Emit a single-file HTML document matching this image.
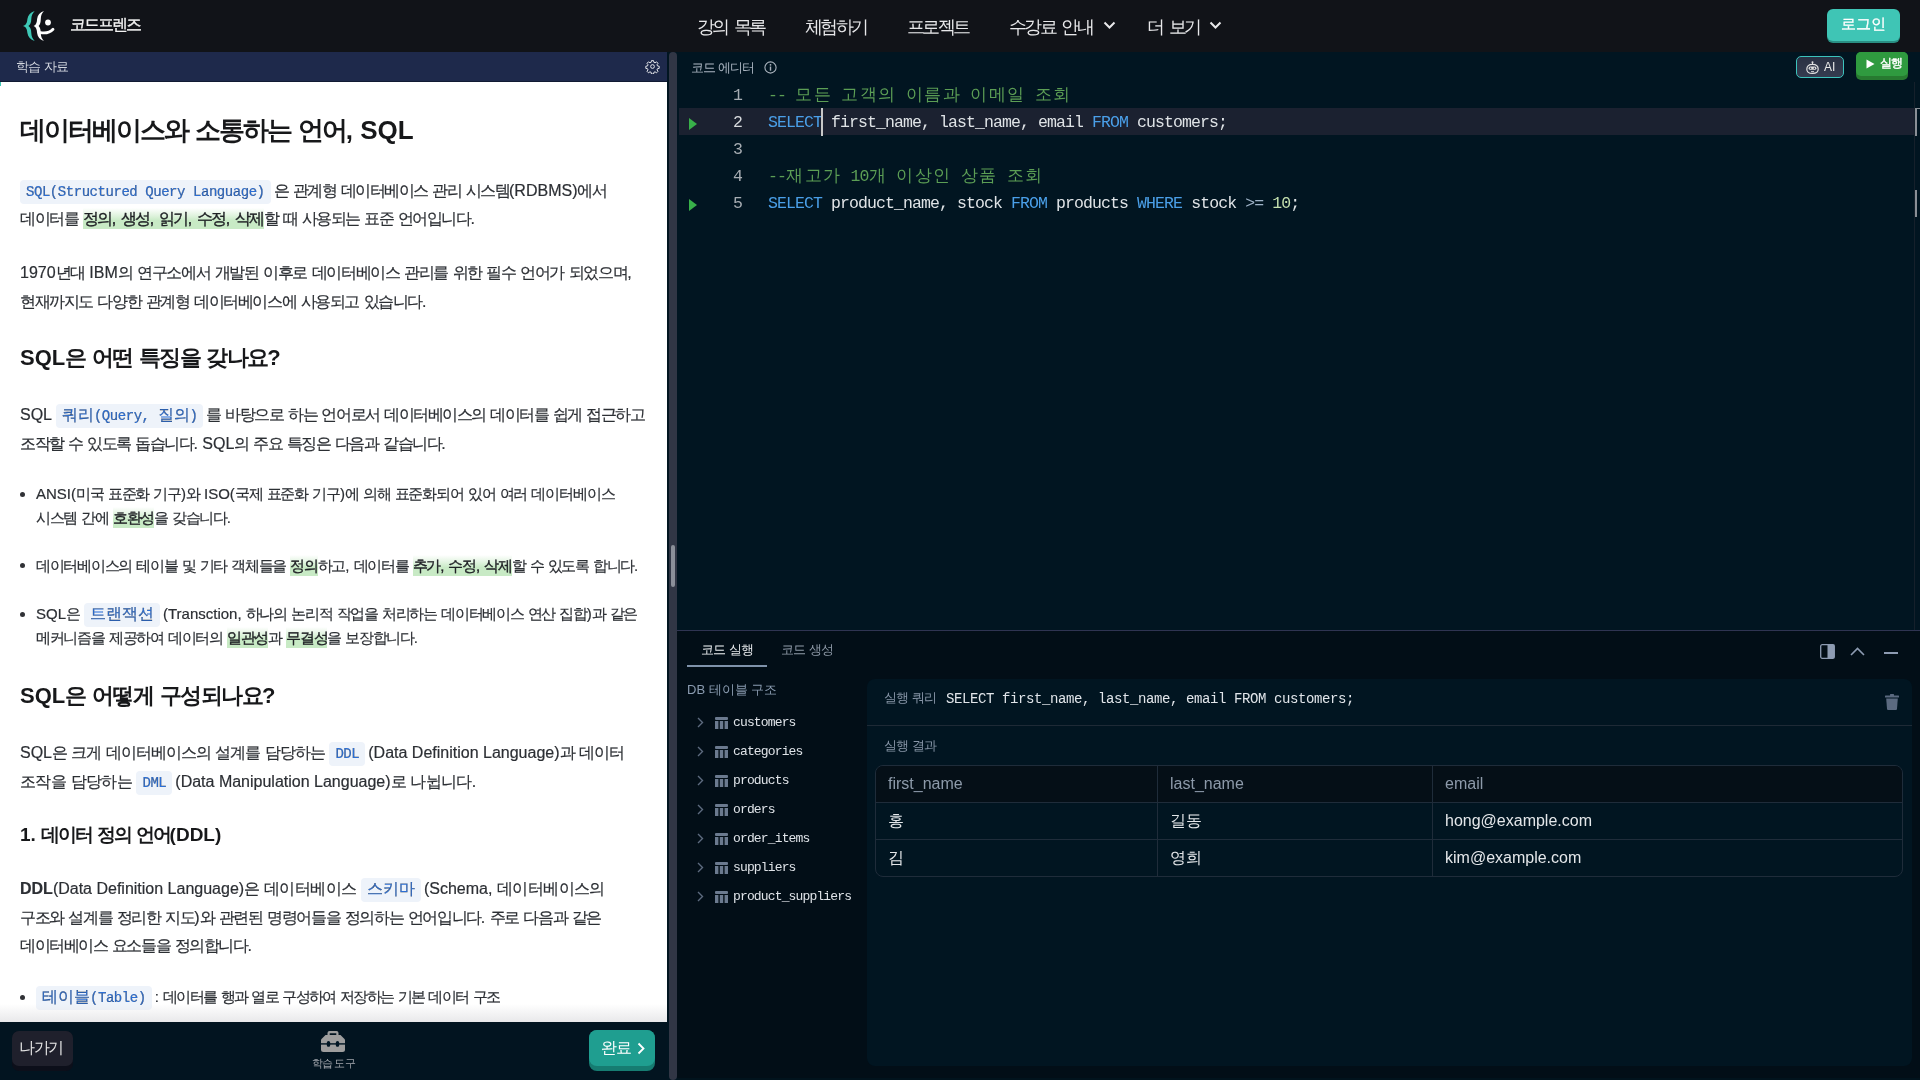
<!DOCTYPE html>
<html lang="ko"><head><meta charset="utf-8">
<style>
*{box-sizing:border-box;margin:0;padding:0}
html,body{width:1920px;height:1080px;overflow:hidden;background:#011521;font-family:"Liberation Sans",sans-serif}
.abs{position:absolute}
#hdr,#left,#editor,#bottom{will-change:transform}
#hdr{position:absolute;left:0;top:0;width:1920px;height:52px;background:#111318}
#hdr .brand{position:absolute;left:70px;top:14px;font-size:16px;color:#f2f2f2;font-weight:400;-webkit-text-stroke:0.35px #f2f2f2;letter-spacing:-1.9px;white-space:nowrap;line-height:22px}
.nav{position:absolute;top:16px;font-size:17.5px;letter-spacing:-2.65px;word-spacing:4px;color:#e8e8ea;white-space:nowrap;line-height:22px}
.chev{position:absolute;top:21px}
#login{position:absolute;left:1827px;top:9px;width:73px;height:32px;background:#3fc5b5;border-radius:6px;box-shadow:0 2px 0 #2a8f84;color:#fff;font-size:15px;text-align:center;line-height:30px;-webkit-text-stroke:0.3px #fff}

#left{position:absolute;left:0;top:52px;width:667px;height:1028px;background:#fff;overflow:hidden}
#lhead{position:absolute;left:0;top:0;width:667px;height:30px;background:#1e294b;border-bottom:1px solid #111a33}
#lhead span{position:absolute;left:16px;top:6px;font-size:13px;color:#d3d7df;line-height:17px;letter-spacing:-0.7px}
#content{position:absolute;left:0;top:30px;width:667px;height:940px;color:#303236;overflow:hidden;background:#fff}
#cin{position:absolute;left:0;top:-82px;width:667px;height:1080px}
.L{position:absolute;left:20px;white-space:nowrap;line-height:24px;height:24px}
.h1{font-size:26px;font-weight:700;color:#17181a}
.h2{font-size:22px;font-weight:700;color:#17181a}
.h3{font-size:19px;font-weight:700;color:#17181a}
.p{font-size:16px;color:#2c2f34;-webkit-text-stroke:0.2px #2c2f34}
.b{left:36px;font-size:15px;color:#2c2f34;-webkit-text-stroke:0.2px #2c2f34}
.L .h{letter-spacing:var(--ls,0px)}
code{font-family:"Liberation Mono",monospace;font-size:14px;color:#2b6fd6;background:#eef3fa;border-radius:4px;padding:4px 6px;letter-spacing:-0.45px;margin-right:3px}
code .k{font-size:15.6px;letter-spacing:0;line-height:10px}
mark{background:linear-gradient(rgba(200,234,197,0) 0%,rgba(200,234,197,0.55) 35%,#c8eac5 60%);color:#202226;font-weight:400;-webkit-text-stroke:0.35px #202226;padding:2px 0}
.dot{position:absolute;left:20px;width:5px;height:5px;border-radius:50%;background:#303236}
#lbot{position:absolute;left:0;top:970px;width:667px;height:58px;background:#021420}

#divider{position:absolute;left:667px;top:52px;width:10px;height:1028px;background:#011521}
#divbar{position:absolute;left:669px;top:52px;width:8px;height:1028px;background:#313645;border-radius:4px}

#editor{position:absolute;left:677px;top:52px;width:1243px;height:578px;background:#011521}
.ln{position:absolute;left:0;width:66px;text-align:right;font-family:"Liberation Mono",monospace;font-size:16px;color:#9aa3ad;line-height:27px}
.code{position:absolute;left:91px;font-family:"Liberation Mono",monospace;font-size:16px;color:#d9dde2;line-height:27px;white-space:pre}
.kw{color:#4fa2f0}.cm{color:#5aa05a}.num{color:#c7e3b5}


#lfade{position:absolute;left:0;top:952px;width:667px;height:18px;background:linear-gradient(rgba(255,255,255,0),rgba(230,230,232,0.9))}
#exit{position:absolute;left:12px;top:979px;width:61px;height:40px;background:#0c0f1a;border-radius:7px}
#exit div{position:absolute;left:0;top:0;width:61px;height:35px;background:#1f202c;border-radius:7px;color:#e6e6e6;font-size:16px;line-height:33px;text-align:center;letter-spacing:-1.2px;text-indent:-3px}
#done{position:absolute;left:589px;top:978px;width:66px;height:41px;background:#167c71;border-radius:8px}
#done div{position:absolute;left:0;top:0;width:66px;height:36px;background:#1f9e90;border-radius:8px;color:#fff;font-size:16px;line-height:35px;padding-left:12px;letter-spacing:-1.5px}
#tool{position:absolute;left:303px;top:1004px;width:61px;white-space:nowrap;color:#a0a4aa;font-size:10.5px;letter-spacing:-0.9px;text-align:center;line-height:14px}
.etitle{position:absolute;left:14px;top:7px;font-size:13px;color:#a9b4c0;line-height:17px;letter-spacing:-0.9px}
#aibtn{position:absolute;left:1119px;top:4px;width:48px;height:22px;border:1px solid #3cc3bd;border-radius:5px;background:linear-gradient(#2a3143,#353c50)}
#aibtn span{position:absolute;left:27px;top:2px;font-size:12px;color:#e8e8e8;line-height:16px}
#runbtn{position:absolute;left:1179px;top:0;width:52px;height:28px;background:#277a30;border-radius:5px}
#runbtn div{position:absolute;left:0;top:0;width:52px;height:24px;background:#2f9a3f;border-radius:5px}
#runbtn span{position:absolute;left:24px;top:3px;font-size:12px;color:#fff;line-height:16px;font-weight:400;-webkit-text-stroke:0.4px #fff;letter-spacing:-0.6px}
.ln{position:absolute;left:0;width:65px;text-align:right;font-family:"Liberation Mono",monospace;font-size:16.5px;letter-spacing:-0.9px;color:#a7adb3;line-height:27px;height:27px}
.code{position:absolute;left:91px;font-family:"Liberation Mono",monospace;font-size:16.5px;letter-spacing:-0.9px;color:#dfe3e6;line-height:27px;height:27px;white-space:pre}
.kk{letter-spacing:1.5px}
.kw{color:#4a9fe8}.cm{color:#5c9e55}.num{color:#c3dfae}.op{color:#9fb3c8}
#curline{position:absolute;left:2px;top:56px;width:1235px;height:27px;background:#1b2130}
.run{position:absolute;left:12px;width:0;height:0;border-top:6px solid transparent;border-bottom:6px solid transparent;border-left:8px solid #38b049}
#cursor{position:absolute;left:144px;top:56px;width:2px;height:28px;background:#c8c8c8}
#eruler{position:absolute;left:1237px;top:30px;width:1px;height:548px;background:#15202b}

.tab{position:absolute;top:10px;font-size:13px;line-height:17px;letter-spacing:-0.6px}
#tabline{position:absolute;left:10px;top:34px;width:80px;height:2px;background:#7f92aa}
#dbt{position:absolute;left:10px;top:50px;font-size:13px;color:#8a9bb0;line-height:17px}
.tr{position:absolute;left:0;height:20px;width:190px}
.tr .nm{position:absolute;left:56px;top:1px;font-family:"Liberation Mono",monospace;font-size:13px;letter-spacing:-0.85px;color:#dfe3e8;line-height:18px}
#card{position:absolute;left:190px;top:48px;width:1045px;height:387px;background:#011521;border-radius:8px}
#qlabel{position:absolute;left:17px;top:10px;font-size:13px;color:#8896a8;line-height:17px;letter-spacing:-0.6px}
#qtext{position:absolute;left:79px;top:11px;font-family:"Liberation Mono",monospace;font-size:14px;letter-spacing:-0.4px;color:#e1e5ea;line-height:18px;white-space:pre}
#qsep{position:absolute;left:0;top:46px;width:1045px;height:1px;background:#1e2a36}
#rlabel{position:absolute;left:17px;top:58px;font-size:13px;color:#8896a8;line-height:17px;letter-spacing:-0.6px}
#tbl{position:absolute;left:8px;top:86px;width:1028px;height:112px;border:1px solid #1f2c3a;border-radius:8px;overflow:hidden}
.row{position:absolute;left:0;width:1026px;height:37px;border-bottom:1px solid #1f2c3a}
.cell{position:absolute;top:0;height:37px;line-height:36px;font-size:16px;padding-left:12px}
.c2{border-left:1px solid #1f2c3a}
#bottom{position:absolute;left:677px;top:630px;width:1243px;height:450px;background:#020e17;border-top:1px solid #2f3452}
.c2{height:37px}
</style></head><body>
<div id="hdr">
  <svg class="abs" style="left:0;top:0" width="70" height="52" viewBox="0 0 70 52">
    <path d="M34.7,11 C30.5,12.5 28,15 27.4,19 C27,22.5 26.5,24.8 23,26 C26.5,27.2 27,29.5 27.4,33 C28,37 30.5,39.5 34.7,41 C32.2,38.5 31.5,36 31.3,33 C31.1,29.5 30.6,27.3 28.4,26 C30.6,24.7 31.1,22.5 31.3,19 C31.5,16 32.2,13.5 34.7,11 Z" fill="#3ec8b6"/>
    <path d="M43.9,11 C39.9,12.5 37.6,15 37.1,19 C36.8,22.5 36.4,24.8 33.6,26 C36.4,27.2 36.8,29.5 37.1,33 C37.6,37 39.9,39.5 43.9,41 C41.5,38.5 40.9,36 40.8,33 C40.6,29.5 40.2,27.3 38.6,26 C40.2,24.7 40.6,22.5 40.8,19 C40.9,16 41.5,13.5 43.9,11 Z" fill="#fff"/>
    <circle cx="48" cy="22.5" r="2.9" fill="#fff"/>
    <path d="M40.5,32.6 C45.5,33.4 50.5,32 53,29.2" stroke="#fff" stroke-width="2.8" fill="none" stroke-linecap="round"/>
  </svg>
  <div class="brand">코드프렌즈</div>
  <div class="nav" style="left:697px">강의 목록</div>
  <div class="nav" style="left:805px">체험하기</div>
  <div class="nav" style="left:907px">프로젝트</div>
  <div class="nav" style="left:1009px">수강료 안내</div>
  <svg class="chev" style="left:1103px" width="13" height="9" viewBox="0 0 13 9"><path d="M1.5 1.5 L6.5 6.5 L11.5 1.5" stroke="#e8e8ea" stroke-width="2" fill="none"/></svg>
  <div class="nav" style="left:1147px">더 보기</div>
  <svg class="chev" style="left:1209px" width="13" height="9" viewBox="0 0 13 9"><path d="M1.5 1.5 L6.5 6.5 L11.5 1.5" stroke="#e8e8ea" stroke-width="2" fill="none"/></svg>
  <div id="login">로그인</div>
</div>

<div id="left">
  <div id="lhead"><span>학습 자료</span>
    <svg class="abs" style="left:645px;top:7px" width="15" height="15" viewBox="0 0 24 24"><path fill="none" stroke="#e5e7eb" stroke-width="1.6" d="M10.3 2.6h3.4l.5 2.7 1.9.8 2.3-1.6 2.4 2.4-1.6 2.3.8 1.9 2.7.5v3.4l-2.7.5-.8 1.9 1.6 2.3-2.4 2.4-2.3-1.6-1.9.8-.5 2.7h-3.4l-.5-2.7-1.9-.8-2.3 1.6-2.4-2.4 1.6-2.3-.8-1.9-2.7-.5v-3.4l2.7-.5.8-1.9-1.6-2.3 2.4-2.4 2.3 1.6 1.9-.8z"/><circle cx="12" cy="12" r="3" fill="none" stroke="#e5e7eb" stroke-width="1.6"/></svg>
  </div>
  
  <div id="content"><div id="cin">
    <div class="L h1" style="top:118px;--ls:-2.054px"><span class="h">데이터베이스와</span> <span class="h">소통하는</span> <span class="h">언어</span>, SQL</div>
    <div class="L p" style="top:179px;--ls:-1.490px"><code>SQL(Structured Query Language)</code><span class="h">은</span> <span class="h">관계형</span> <span class="h">데이터베이스</span> <span class="h">관리</span> <span class="h">시스템</span>(RDBMS)<span class="h">에서</span></div>
    <div class="L p" style="top:207px;--ls:-1.458px"><span class="h">데이터를</span> <mark><span class="h">정의</span>, <span class="h">생성</span>, <span class="h">읽기</span>, <span class="h">수정</span>, <span class="h">삭제</span></mark><span class="h">할</span> <span class="h">때</span> <span class="h">사용되는</span> <span class="h">표준</span> <span class="h">언어입니다</span>.</div>
    <div class="L p" style="top:261px;--ls:-1.337px">1970<span class="h">년대</span> IBM<span class="h">의</span> <span class="h">연구소에서</span> <span class="h">개발된</span> <span class="h">이후로</span> <span class="h">데이터베이스</span> <span class="h">관리를</span> <span class="h">위한</span> <span class="h">필수</span> <span class="h">언어가</span> <span class="h">되었으며</span>,</div>
    <div class="L p" style="top:290px;--ls:-1.399px"><span class="h">현재까지도</span> <span class="h">다양한</span> <span class="h">관계형</span> <span class="h">데이터베이스에</span> <span class="h">사용되고</span> <span class="h">있습니다</span>.</div>
    <div class="L h2" style="top:346px;--ls:-1.588px">SQL<span class="h">은</span> <span class="h">어떤</span> <span class="h">특징을</span> <span class="h">갖나요</span>?</div>
    <div class="L p" style="top:403px;--ls:-1.478px">SQL <code><span class="k">쿼리</span>(Query, <span class="k">질의</span>)</code><span class="h">를</span> <span class="h">바탕으로</span> <span class="h">하는</span> <span class="h">언어로서</span> <span class="h">데이터베이스의</span> <span class="h">데이터를</span> <span class="h">쉽게</span> <span class="h">접근하고</span></div>
    <div class="L p" style="top:432px;--ls:-1.455px"><span class="h">조작할</span> <span class="h">수</span> <span class="h">있도록</span> <span class="h">돕습니다</span>. SQL<span class="h">의</span> <span class="h">주요</span> <span class="h">특징은</span> <span class="h">다음과</span> <span class="h">같습니다</span>.</div>
    <div class="dot" style="top:492px"></div>
    <div class="L b" style="top:482px;--ls:-1.193px">ANSI(<span class="h">미국</span> <span class="h">표준화</span> <span class="h">기구</span>)<span class="h">와</span> ISO(<span class="h">국제</span> <span class="h">표준화</span> <span class="h">기구</span>)<span class="h">에</span> <span class="h">의해</span> <span class="h">표준화되어</span> <span class="h">있어</span> <span class="h">여러</span> <span class="h">데이터베이스</span></div>
    <div class="L b" style="top:506px;--ls:-1.294px"><span class="h">시스템</span> <span class="h">간에</span> <mark><span class="h">호환성</span></mark><span class="h">을</span> <span class="h">갖습니다</span>.</div>
    <div class="dot" style="top:563px"></div>
    <div class="L b" style="top:554px;--ls:-1.271px"><span class="h">데이터베이스의</span> <span class="h">테이블</span> <span class="h">및</span> <span class="h">기타</span> <span class="h">객체들을</span> <mark><span class="h">정의</span></mark><span class="h">하고</span>, <span class="h">데이터를</span> <mark><span class="h">추가</span>, <span class="h">수정</span>, <span class="h">삭제</span></mark><span class="h">할</span> <span class="h">수</span> <span class="h">있도록</span> <span class="h">합니다</span>.</div>
    <div class="dot" style="top:612px"></div>
    <div class="L b" style="top:602px;--ls:-1.264px">SQL<span class="h">은</span> <code><span class="k">트랜잭션</span></code>(Transction, <span class="h">하나의</span> <span class="h">논리적</span> <span class="h">작업을</span> <span class="h">처리하는</span> <span class="h">데이터베이스</span> <span class="h">연산</span> <span class="h">집합</span>)<span class="h">과</span> <span class="h">같은</span></div>
    <div class="L b" style="top:626px;--ls:-1.273px"><span class="h">메커니즘을</span> <span class="h">제공하여</span> <span class="h">데이터의</span> <mark><span class="h">일관성</span></mark><span class="h">과</span> <mark><span class="h">무결성</span></mark><span class="h">을</span> <span class="h">보장합니다</span>.</div>
    <div class="L h2" style="top:684px;--ls:-1.496px">SQL<span class="h">은</span> <span class="h">어떻게</span> <span class="h">구성되나요</span>?</div>
    <div class="L p" style="top:741px;--ls:-0.994px">SQL<span class="h">은</span> <span class="h">크게</span> <span class="h">데이터베이스의</span> <span class="h">설계를</span> <span class="h">담당하는</span> <code>DDL</code>(Data Definition Language)<span class="h">과</span> <span class="h">데이터</span></div>
    <div class="L p" style="top:770px;--ls:-0.639px"><span class="h">조작을</span> <span class="h">담당하는</span> <code>DML</code>(Data Manipulation Language)<span class="h">로</span> <span class="h">나뉩니다</span>.</div>
    <div class="L h3" style="top:823px;--ls:-2.159px">1. <span class="h">데이터</span> <span class="h">정의</span> <span class="h">언어</span>(DDL)</div>
    <div class="L p" style="top:877px;--ls:-0.584px"><b>DDL</b>(Data Definition Language)<span class="h">은</span> <span class="h">데이터베이스</span> <code><span class="k">스키마</span></code>(Schema, <span class="h">데이터베이스의</span></div>
    <div class="L p" style="top:906px;--ls:-1.372px"><span class="h">구조와</span> <span class="h">설계를</span> <span class="h">정리한</span> <span class="h">지도</span>)<span class="h">와</span> <span class="h">관련된</span> <span class="h">명령어들을</span> <span class="h">정의하는</span> <span class="h">언어입니다</span>. <span class="h">주로</span> <span class="h">다음과</span> <span class="h">같은</span></div>
    <div class="L p" style="top:934px;--ls:-1.426px"><span class="h">데이터베이스</span> <span class="h">요소들을</span> <span class="h">정의합니다</span>.</div>
    <div class="dot" style="top:995px"></div>
    <div class="L b" style="top:985px;--ls:-1.652px"><code><span class="k">테이블</span>(Table)</code>: <span class="h">데이터를</span> <span class="h">행과</span> <span class="h">열로</span> <span class="h">구성하여</span> <span class="h">저장하는</span> <span class="h">기본</span> <span class="h">데이터</span> <span class="h">구조</span></div>
  </div></div>
  <div class="abs" style="left:0;top:30px;width:1px;height:4px;background:#3ec8b6;z-index:2"></div>
  <div id="lbot"></div>
  <div id="lfade"></div>
  <div id="exit"><div>나가기</div></div>
  <svg class="abs" style="left:320px;top:978px" width="26" height="23" viewBox="0 0 26 23"><path d="M7.5 6 V3 Q7.5 1 9.5 1 H16.5 Q18.5 1 18.5 3 V6 H16.3 V3.3 H9.7 V6 Z" fill="#9e9e9e"/><path d="M5.5 5 H20.5 L25 9.5 V19.5 Q25 22 22.5 22 H3.5 Q1 22 1 19.5 V9.5 Z" fill="#9e9e9e"/><rect x="1" y="13.2" width="24" height="1.4" fill="#011624"/><ellipse cx="8.5" cy="13.9" rx="1.8" ry="2.9" fill="#011624"/><ellipse cx="17.5" cy="13.9" rx="1.8" ry="2.9" fill="#011624"/></svg>
  <div id="tool">학습 도구</div>
  <div id="done"><div>완료</div><svg class="abs" style="left:48px;top:12px" width="8" height="13" viewBox="0 0 8 13"><path d="M1.5 1.5 L6.5 6.5 L1.5 11.5" stroke="#fff" stroke-width="1.8" fill="none"/></svg></div>
</div>

<div id="divider"></div>
<div id="divbar"></div>
<div class="abs" style="left:671px;top:545px;width:4px;height:42px;background:#8b8f99;border-radius:2px"></div>

<div id="editor">
  <div class="etitle">코드 에디터</div>
  <svg class="abs" style="left:87px;top:9px" width="13" height="13" viewBox="0 0 13 13"><circle cx="6.5" cy="6.5" r="5.6" fill="none" stroke="#aab3bd" stroke-width="1.1"/><circle cx="6.5" cy="3.8" r="0.9" fill="#aab3bd"/><rect x="5.8" y="5.5" width="1.4" height="4.2" fill="#aab3bd"/></svg>
  <div id="aibtn"><svg class="abs" style="left:9px;top:4px" width="13" height="13" viewBox="0 0 13 13"><circle cx="6.5" cy="1.3" r="1" fill="#e0e0e0"/><rect x="6" y="1.8" width="1" height="1.6" fill="#e0e0e0"/><path d="M0.8 8.3 Q0.8 3.4 6.5 3.4 Q12.2 3.4 12.2 8.3 Q12.2 12.4 6.5 12.4 Q0.8 12.4 0.8 8.3Z" fill="none" stroke="#e0e0e0" stroke-width="1.2"/><rect x="2.6" y="5.6" width="7.8" height="3.2" rx="1.6" fill="#e0e0e0"/><circle cx="4.6" cy="7.2" r="0.8" fill="#2d3448"/><circle cx="8.4" cy="7.2" r="0.8" fill="#2d3448"/><rect x="5" y="10.2" width="3" height="0.9" fill="#e0e0e0"/></svg><span>AI</span></div>
  <div id="runbtn"><div></div><svg class="abs" style="left:10px;top:7px" width="9" height="10" viewBox="0 0 9 10"><path d="M0.5 0.5 L8.5 5 L0.5 9.5Z" fill="#fff"/></svg><span>실행</span></div>
  <div id="curline"></div>
  <div class="run" style="top:66px"></div>
  <div class="run" style="top:147px"></div>
  <div class="ln" style="top:30px">1</div>
  <div class="ln" style="top:57px;color:#d6d9dc">2</div>
  <div class="ln" style="top:84px">3</div>
  <div class="ln" style="top:111px">4</div>
  <div class="ln" style="top:138px">5</div>
  <div class="code cm" style="top:30px">-- <span class="kk">모든</span> <span class="kk">고객의</span> <span class="kk">이름과</span> <span class="kk">이메일</span> <span class="kk">조회</span></div>
  <div class="code" style="top:57px"><span class="kw">SELECT</span> first_name, last_name, email <span class="kw">FROM</span> customers;</div>
  <div class="code cm" style="top:111px">--<span class="kk">재고가</span> 10<span class="kk">개</span> <span class="kk">이상인</span> <span class="kk">상품</span> <span class="kk">조회</span></div>
  <div class="code" style="top:138px"><span class="kw">SELECT</span> product_name, stock <span class="kw">FROM</span> products <span class="kw">WHERE</span> stock <span class="op">&gt;=</span> <span class="num">10</span>;</div>
  <div id="cursor"></div>
  <div id="eruler"></div>
  <div class="abs" style="left:1238px;top:56px;width:2px;height:28px;background:#8a8f96"></div>
  <div class="abs" style="left:1238px;top:56px;width:5px;height:1px;background:#8a8f96"></div>
  <div class="abs" style="left:1238px;top:138px;width:2px;height:27px;background:#8a8f96"></div>
</div>
<div id="bottom">
  <div class="tab" style="left:24px;color:#e8ebee">코드 실행</div>
  <div class="tab" style="left:104px;color:#8f9aa8">코드 생성</div>
  <div id="tabline"></div>
  <svg class="abs" style="left:1143px;top:13px" width="15" height="15" viewBox="0 0 15 15"><rect x="0.7" y="0.7" width="13.6" height="13.6" rx="1.5" fill="none" stroke="#8d9bb2" stroke-width="1.3"/><rect x="7.5" y="0.7" width="6.8" height="13.6" fill="#8d9bb2"/></svg>
  <svg class="abs" style="left:1173px;top:16px" width="15" height="9" viewBox="0 0 15 9"><path d="M1 8 L7.5 1.5 L14 8" stroke="#8d9bb2" stroke-width="1.6" fill="none"/></svg>
  <div class="abs" style="left:1207px;top:21px;width:14px;height:1.5px;background:#8d9bb2"></div>
  <div id="dbt">DB 테이블 구조</div>
<div class="tr" style="top:82px"><svg class="abs" style="left:20px;top:4px" width="7" height="11" viewBox="0 0 7 11"><path d="M1 1 L5.5 5.5 L1 10" stroke="#5d6b7f" stroke-width="1.4" fill="none"/></svg><svg class="abs" style="left:38px;top:4px" width="13" height="12" viewBox="0 0 13 12"><rect x="0" y="0" width="13" height="3" rx="1" fill="#6b7a8f"/><rect x="0" y="4" width="3.4" height="8" fill="#6b7a8f"/><rect x="4.8" y="4" width="3.4" height="8" fill="#6b7a8f"/><rect x="9.6" y="4" width="3.4" height="8" fill="#6b7a8f"/></svg><div class="nm">customers</div></div>
<div class="tr" style="top:111px"><svg class="abs" style="left:20px;top:4px" width="7" height="11" viewBox="0 0 7 11"><path d="M1 1 L5.5 5.5 L1 10" stroke="#5d6b7f" stroke-width="1.4" fill="none"/></svg><svg class="abs" style="left:38px;top:4px" width="13" height="12" viewBox="0 0 13 12"><rect x="0" y="0" width="13" height="3" rx="1" fill="#6b7a8f"/><rect x="0" y="4" width="3.4" height="8" fill="#6b7a8f"/><rect x="4.8" y="4" width="3.4" height="8" fill="#6b7a8f"/><rect x="9.6" y="4" width="3.4" height="8" fill="#6b7a8f"/></svg><div class="nm">categories</div></div>
<div class="tr" style="top:140px"><svg class="abs" style="left:20px;top:4px" width="7" height="11" viewBox="0 0 7 11"><path d="M1 1 L5.5 5.5 L1 10" stroke="#5d6b7f" stroke-width="1.4" fill="none"/></svg><svg class="abs" style="left:38px;top:4px" width="13" height="12" viewBox="0 0 13 12"><rect x="0" y="0" width="13" height="3" rx="1" fill="#6b7a8f"/><rect x="0" y="4" width="3.4" height="8" fill="#6b7a8f"/><rect x="4.8" y="4" width="3.4" height="8" fill="#6b7a8f"/><rect x="9.6" y="4" width="3.4" height="8" fill="#6b7a8f"/></svg><div class="nm">products</div></div>
<div class="tr" style="top:169px"><svg class="abs" style="left:20px;top:4px" width="7" height="11" viewBox="0 0 7 11"><path d="M1 1 L5.5 5.5 L1 10" stroke="#5d6b7f" stroke-width="1.4" fill="none"/></svg><svg class="abs" style="left:38px;top:4px" width="13" height="12" viewBox="0 0 13 12"><rect x="0" y="0" width="13" height="3" rx="1" fill="#6b7a8f"/><rect x="0" y="4" width="3.4" height="8" fill="#6b7a8f"/><rect x="4.8" y="4" width="3.4" height="8" fill="#6b7a8f"/><rect x="9.6" y="4" width="3.4" height="8" fill="#6b7a8f"/></svg><div class="nm">orders</div></div>
<div class="tr" style="top:198px"><svg class="abs" style="left:20px;top:4px" width="7" height="11" viewBox="0 0 7 11"><path d="M1 1 L5.5 5.5 L1 10" stroke="#5d6b7f" stroke-width="1.4" fill="none"/></svg><svg class="abs" style="left:38px;top:4px" width="13" height="12" viewBox="0 0 13 12"><rect x="0" y="0" width="13" height="3" rx="1" fill="#6b7a8f"/><rect x="0" y="4" width="3.4" height="8" fill="#6b7a8f"/><rect x="4.8" y="4" width="3.4" height="8" fill="#6b7a8f"/><rect x="9.6" y="4" width="3.4" height="8" fill="#6b7a8f"/></svg><div class="nm">order_items</div></div>
<div class="tr" style="top:227px"><svg class="abs" style="left:20px;top:4px" width="7" height="11" viewBox="0 0 7 11"><path d="M1 1 L5.5 5.5 L1 10" stroke="#5d6b7f" stroke-width="1.4" fill="none"/></svg><svg class="abs" style="left:38px;top:4px" width="13" height="12" viewBox="0 0 13 12"><rect x="0" y="0" width="13" height="3" rx="1" fill="#6b7a8f"/><rect x="0" y="4" width="3.4" height="8" fill="#6b7a8f"/><rect x="4.8" y="4" width="3.4" height="8" fill="#6b7a8f"/><rect x="9.6" y="4" width="3.4" height="8" fill="#6b7a8f"/></svg><div class="nm">suppliers</div></div>
<div class="tr" style="top:256px"><svg class="abs" style="left:20px;top:4px" width="7" height="11" viewBox="0 0 7 11"><path d="M1 1 L5.5 5.5 L1 10" stroke="#5d6b7f" stroke-width="1.4" fill="none"/></svg><svg class="abs" style="left:38px;top:4px" width="13" height="12" viewBox="0 0 13 12"><rect x="0" y="0" width="13" height="3" rx="1" fill="#6b7a8f"/><rect x="0" y="4" width="3.4" height="8" fill="#6b7a8f"/><rect x="4.8" y="4" width="3.4" height="8" fill="#6b7a8f"/><rect x="9.6" y="4" width="3.4" height="8" fill="#6b7a8f"/></svg><div class="nm">product_suppliers</div></div>
  <div id="card">
    <div id="qlabel">실행 쿼리</div>
    <div id="qtext">SELECT first_name, last_name, email FROM customers;</div>
    <svg class="abs" style="left:1018px;top:15px" width="14" height="16" viewBox="0 0 14 16"><rect x="0" y="1.5" width="14" height="2" rx="0.5" fill="#5b6a80"/><rect x="5" y="0" width="4" height="2" rx="0.5" fill="#5b6a80"/><path d="M1.2 4.5 H12.8 L12 15 Q11.9 16 10.9 16 H3.1 Q2.1 16 2 15Z" fill="#5b6a80"/></svg>
    <div id="qsep"></div>
    <div id="rlabel">실행 결과</div>
    <div id="tbl">
      <div class="row" style="top:0;background:#050f17"><div class="cell" style="left:0;color:#8d9aaa">first_name</div><div class="cell c2" style="left:281px;color:#8d9aaa">last_name</div><div class="cell c2" style="left:556px;color:#8d9aaa">email</div></div>
      <div class="row" style="top:37px"><div class="cell" style="left:0;color:#e4e7ea">홍</div><div class="cell c2" style="left:281px;color:#e4e7ea">길동</div><div class="cell c2" style="left:556px;color:#e4e7ea">hong@example.com</div></div>
      <div class="row" style="top:74px;border-bottom:none"><div class="cell" style="left:0;color:#e4e7ea">김</div><div class="cell c2" style="left:281px;color:#e4e7ea">영희</div><div class="cell c2" style="left:556px;color:#e4e7ea">kim@example.com</div></div>
    </div>
  </div>
  <div class="abs" style="left:0;top:447px;width:1243px;height:3px;background:#01131d"></div>
</div>
</body></html>
